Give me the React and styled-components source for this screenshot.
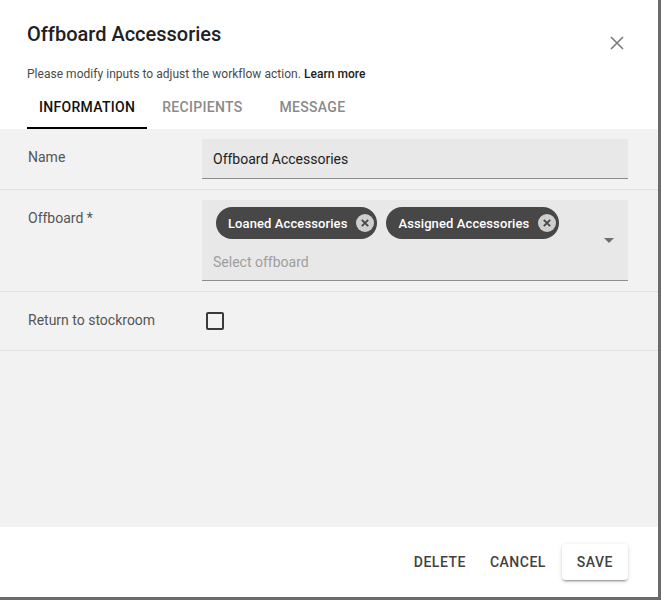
import React from 'react'
import styled, { createGlobalStyle } from 'styled-components'

const GlobalStyle = createGlobalStyle`
  html, body {
    margin: 0;
    padding: 0;
    background: #6b6b6b;
  }
  body {
    font-family: Roboto, "Liberation Sans", Arial, sans-serif;
    -webkit-font-smoothing: antialiased;
  }
`

const Dialog = styled.div`
  width: 658px;
  height: 597px;
  background: #ffffff;
  display: flex;
  flex-direction: column;
  overflow: hidden;
`

const Header = styled.header`
  padding: 22px 29px 0 27px;
`

const TitleRow = styled.div`
  display: flex;
  justify-content: space-between;
  align-items: flex-start;
`

const Title = styled.h2`
  margin: 0;
  font-size: 20px;
  line-height: 24px;
  font-weight: 500;
  color: #212121;
`

const CloseButton = styled.button`
  border: none;
  background: none;
  padding: 0;
  margin: 9px 0 0;
  width: 24px;
  height: 24px;
  display: flex;
  align-items: center;
  justify-content: center;
  cursor: pointer;
`

const Subtitle = styled.p`
  margin: 12px 0 0;
  font-size: 12px;
  line-height: 14px;
  letter-spacing: 0.03px;
  color: #4a4a4a;

  b {
    font-weight: 500;
    color: #212121;
  }
`

const Tabs = styled.nav`
  display: flex;
  margin-top: 6px;
`

const Tab = styled.div`
  height: 42px;
  padding: 0 ${props => props.$pad}px;
  display: flex;
  align-items: center;
  font-size: 14px;
  font-weight: 500;
  letter-spacing: 0.3px;
  text-transform: uppercase;
  color: ${props => (props.$active ? '#111' : '#8a8a8a')};
  border-bottom: 2px solid ${props => (props.$active ? '#000' : 'transparent')};
  box-sizing: border-box;
`

const Content = styled.section`
  flex: 1;
  background: #f2f2f2;
`

const FieldRow = styled.div`
  display: grid;
  grid-template-columns: 174px 1fr;
  padding: 10px 30px 10px 28px;
  border-bottom: 1px solid #e2e2e2;
`

const Label = styled.div`
  padding-top: 8px;
  font-size: 14px;
  line-height: 20px;
  color: #555555;
`

const TextInput = styled.div`
  height: 40px;
  box-sizing: border-box;
  padding: 0 11px;
  display: flex;
  align-items: center;
  background: #e8e8e8;
  border-bottom: 1px solid #8c8c8c;
  font-size: 14px;
  color: #212121;
`

const SelectBox = styled.div`
  position: relative;
  height: 81px;
  box-sizing: border-box;
  padding: 7px 40px 0 14px;
  background: #e8e8e8;
  border-bottom: 1px solid #8c8c8c;
`

const ChipList = styled.div`
  display: flex;
  gap: 9px;
`

const Chip = styled.span`
  height: 32px;
  border-radius: 16px;
  background: #474747;
  color: #ffffff;
  display: inline-flex;
  align-items: center;
  padding: 0 3px 0 12px;
  font-size: 13px;
  font-weight: 500;
  letter-spacing: 0.1px;
`

const ChipRemove = styled.span`
  width: 18px;
  height: 18px;
  margin-left: 9px;
  display: inline-flex;
`

const Placeholder = styled.div`
  margin: 15px 0 0 -3px;
  font-size: 14px;
  line-height: 16px;
  color: #9e9e9e;
`

const Arrow = styled.span`
  position: absolute;
  right: 14px;
  top: 38px;
  width: 0;
  height: 0;
  border-left: 5px solid transparent;
  border-right: 5px solid transparent;
  border-top: 5px solid #6f6f6f;
`

const CheckWrap = styled.div`
  height: 38px;
  display: flex;
  align-items: center;
  padding-left: 4px;
`

const Checkbox = styled.span`
  width: 18px;
  height: 18px;
  box-sizing: border-box;
  border: 2px solid #3a3a3a;
  border-radius: 2px;
`

const Footer = styled.footer`
  height: 70px;
  display: flex;
  justify-content: flex-end;
  align-items: center;
  gap: 8px;
  padding: 0 30px 0 0;
  background: #ffffff;
`

const Button = styled.button`
  height: 36px;
  min-width: 64px;
  padding: 0 ${props => (props.$raised ? 15 : 8)}px;
  border: none;
  border-radius: 4px;
  background: #ffffff;
  font-family: inherit;
  font-size: 14px;
  font-weight: 500;
  letter-spacing: 0.5px;
  text-transform: uppercase;
  color: #424242;
  box-shadow: ${props =>
    props.$raised
      ? '0 3px 1px -2px rgba(0,0,0,0.2), 0 2px 2px 0 rgba(0,0,0,0.14), 0 1px 5px 0 rgba(0,0,0,0.12)'
      : 'none'};
  cursor: pointer;
`

const CloseIcon = () => (
  <svg width="14" height="14" viewBox="0 0 14 14">
    <path d="M1 1L13 13M13 1L1 13" stroke="#7a7a7a" strokeWidth="1.6" />
  </svg>
)

const CancelIcon = () => (
  <svg width="18" height="18" viewBox="0 0 18 18">
    <circle cx="9" cy="9" r="9" fill="#cfcfcf" />
    <path d="M5.8 5.8L12.2 12.2M12.2 5.8L5.8 12.2" stroke="#474747" strokeWidth="1.8" />
  </svg>
)

const chips = ['Loaned Accessories', 'Assigned Accessories']

export default function App() {
  return (
    <>
      <GlobalStyle />
      <Dialog>
        <Header>
          <TitleRow>
            <Title>Offboard Accessories</Title>
            <CloseButton aria-label="Close">
              <CloseIcon />
            </CloseButton>
          </TitleRow>
          <Subtitle>
            Please modify inputs to adjust the workflow action. <b>Learn more</b>
          </Subtitle>
          <Tabs>
            <Tab $active $pad={12}>Information</Tab>
            <Tab $pad={15}>Recipients</Tab>
            <Tab $pad={22}>Message</Tab>
          </Tabs>
        </Header>

        <Content>
          <FieldRow>
            <Label>Name</Label>
            <TextInput>Offboard Accessories</TextInput>
          </FieldRow>
          <FieldRow>
            <Label>Offboard *</Label>
            <SelectBox>
              <ChipList>
                {chips.map(c => (
                  <Chip key={c}>
                    {c}
                    <ChipRemove>
                      <CancelIcon />
                    </ChipRemove>
                  </Chip>
                ))}
              </ChipList>
              <Placeholder>Select offboard</Placeholder>
              <Arrow />
            </SelectBox>
          </FieldRow>
          <FieldRow>
            <Label>Return to stockroom</Label>
            <CheckWrap>
              <Checkbox />
            </CheckWrap>
          </FieldRow>
        </Content>

        <Footer>
          <Button>Delete</Button>
          <Button>Cancel</Button>
          <Button $raised>Save</Button>
        </Footer>
      </Dialog>
    </>
  )
}
